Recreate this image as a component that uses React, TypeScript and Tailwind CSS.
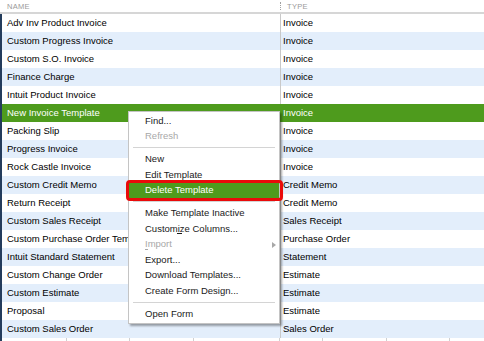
import React from "react";

const rows: [string, string][] = [
  ["Adv Inv Product Invoice", "Invoice"],
  ["Custom Progress Invoice", "Invoice"],
  ["Custom S.O. Invoice", "Invoice"],
  ["Finance Charge", "Invoice"],
  ["Intuit Product Invoice", "Invoice"],
  ["New Invoice Template", "Invoice"],
  ["Packing Slip", "Invoice"],
  ["Progress Invoice", "Invoice"],
  ["Rock Castle Invoice", "Invoice"],
  ["Custom Credit Memo", "Credit Memo"],
  ["Return Receipt", "Credit Memo"],
  ["Custom Sales Receipt", "Sales Receipt"],
  ["Custom Purchase Order Template", "Purchase Order"],
  ["Intuit Standard Statement", "Statement"],
  ["Custom Change Order", "Estimate"],
  ["Custom Estimate", "Estimate"],
  ["Proposal", "Estimate"],
  ["Custom Sales Order", "Sales Order"],
];

type Item =
  | { sep: true }
  | {
      sep?: false;
      label: string;
      disabled?: boolean;
      active?: boolean;
      sub?: boolean;
      ul?: { left: number; width: number };
    };

const items: Item[] = [
  { label: "Find..." },
  { label: "Refresh", disabled: true },
  { sep: true },
  { label: "New" },
  { label: "Edit Template" },
  { label: "Delete Template", active: true },
  { sep: true },
  { label: "Make Template Inactive" },
  { label: "Customize Columns...", ul: { left: 48, width: 5 } },
  { label: "Import", disabled: true, sub: true, ul: { left: 16, width: 3 } },
  { label: "Export..." },
  { label: "Download Templates..." },
  { label: "Create Form Design..." },
  { sep: true },
  { label: "Open Form" },
];

export default function App() {
  return (
    <div
      className="relative w-[484px] h-[341px] overflow-hidden bg-white text-[9.5px] leading-[12px] text-black"
      style={{ fontFamily: '"Liberation Sans", Arial, sans-serif' }}
    >
      {/* header */}
      <div className="flex h-[14px] border-b-2 border-[#d6d6d6] bg-white text-[7.5px] text-[#9a9a9a] tracking-[0.3px]">
        <div className="w-[280px] pl-[7px] pt-[2px] leading-[9px]">NAME</div>
        <div className="my-[2px] h-[8px] border-l border-dotted border-[#a0a0a0]" />
        <div className="pl-[6px] pt-[2px] leading-[9px]">TYPE</div>
      </div>

      {/* rows */}
      <div className="flex flex-col border-l-2 border-[#243c5c]">
        {rows.map(([name, type], i) => {
          const selected = i === 5;
          const bg = selected ? "bg-[#4e9b1d] text-white" : i % 2 === 1 ? "bg-[#e3eefb]" : "bg-white";
          return (
            <div key={i} className={`flex h-[18px] items-center ${bg}`}>
              <div className="w-[278px] pl-[5px] whitespace-nowrap overflow-hidden">{name}</div>
              <div className={`h-full w-px ${selected ? "bg-[#4e9b1d]" : "bg-[#c9c9c9]"}`} />
              <div className="pl-[2px] whitespace-nowrap">{type}</div>
            </div>
          );
        })}
        <div className="flex h-[3px] bg-white">
          <div className="w-[65px] border-r border-[#d0d0d0]" />
          <div className="w-[63px] border-r border-[#d0d0d0]" />
          <div className="w-[64px] border-r border-[#d0d0d0]" />
          <div className="w-[86px] border-r border-[#d0d0d0]" />
          <div className="w-[43px] border-r border-[#d0d0d0]" />
          <div className="w-[64px] border-r border-[#d0d0d0]" />
          <div className="w-[63px] border-r border-[#d0d0d0]" />
        </div>
      </div>

      {/* context menu */}
      <div className="absolute left-[128px] top-[111px] w-[152px] border border-[#c4c4c4] bg-white pt-[1px] pb-[1px] shadow-[2px_2px_2px_rgba(0,0,0,0.35)]">
        {items.map((it, i) =>
          it.sep ? (
            <div key={i} className="flex h-[7.5px] items-center px-[4px]">
              <div className="h-px w-full bg-[#d4d4d4]" />
            </div>
          ) : (
            <div
              key={i}
              className={`relative flex h-[15.5px] items-center pl-[16px] whitespace-nowrap ${
                it.active ? "bg-[#4e9b1d] text-white" : it.disabled ? "text-[#a8a8a8]" : "text-[#1a1a1a]"
              }`}
            >
              <span>{it.label}</span>
              {it.ul && (
                <div
                  className={`absolute top-[12px] h-px ${it.disabled ? "bg-[#a8a8a8]" : "bg-[#1a1a1a]"}`}
                  style={{ left: it.ul.left, width: it.ul.width }}
                />
              )}
              {it.sub && (
                <svg className="absolute right-[3px] top-[5px]" width="4" height="6" viewBox="0 0 4 6">
                  <path d="M0 0 L4 3 L0 6 Z" fill="#a8a8a8" />
                </svg>
              )}
            </div>
          )
        )}
      </div>

      {/* red highlight box */}
      <div className="absolute left-[126px] top-[180px] h-[21px] w-[157px] rounded-[4px] border-[3px] border-[#ea0a0a]" />
    </div>
  );
}
